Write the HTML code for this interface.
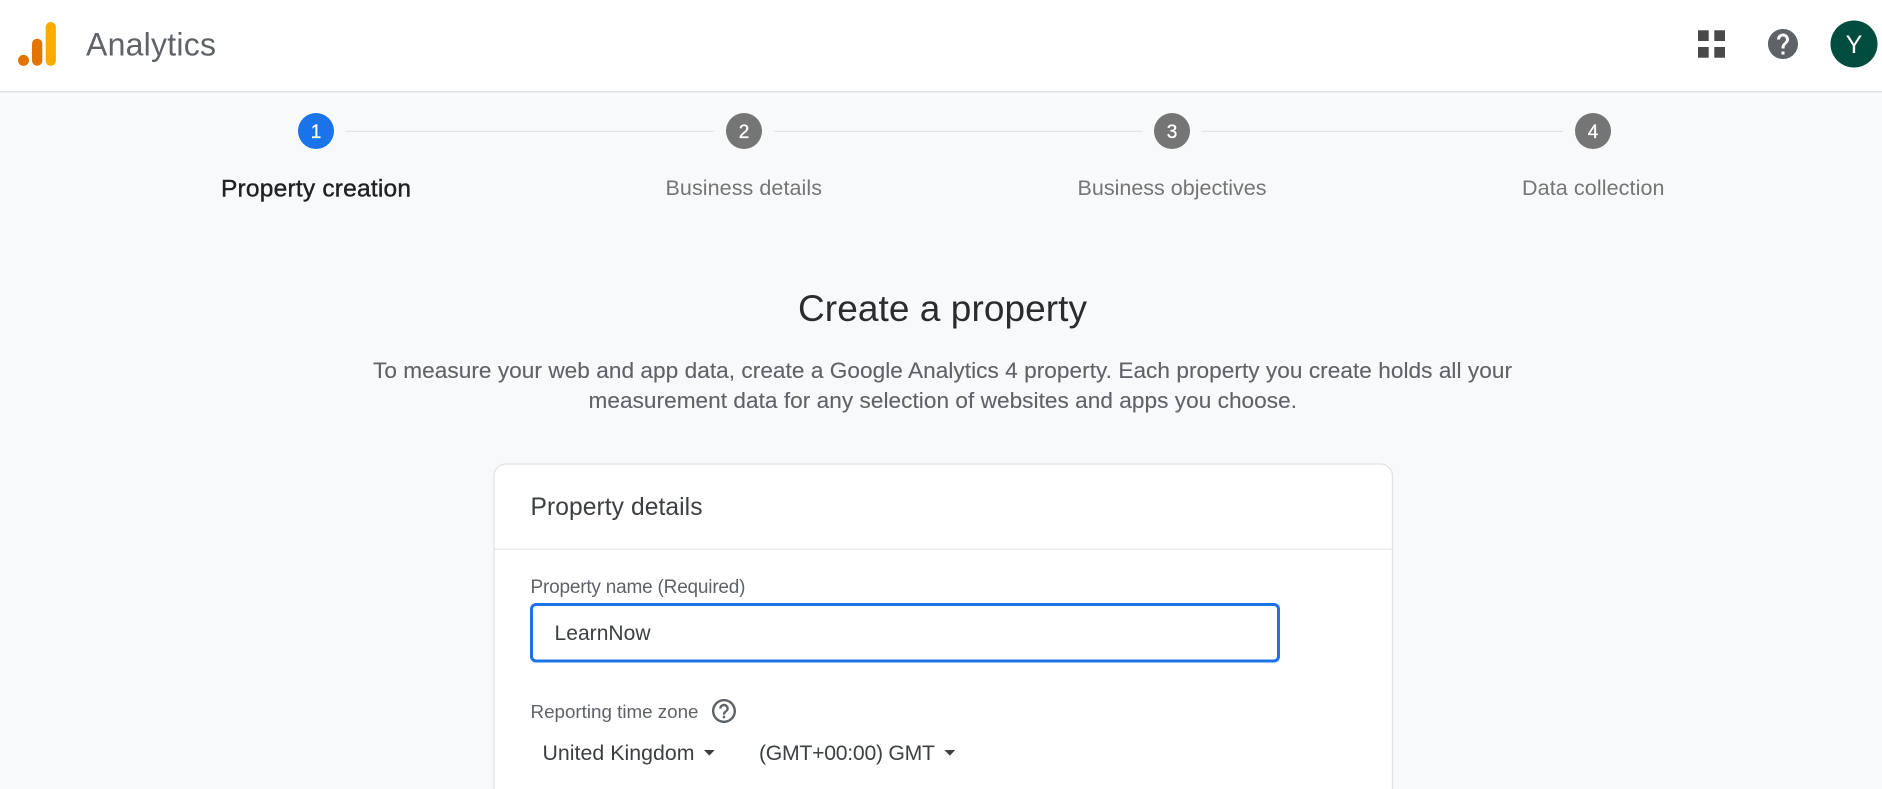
<!DOCTYPE html>
<html lang="en">
<head>
<meta charset="utf-8">
<title>Analytics</title>
<style>
html,body{margin:0;padding:0;width:1882px;height:789px;overflow:hidden;background:#f8f9fb}
svg{display:block;position:absolute;left:0;top:0}
text{font-family:"Liberation Sans",Arial,sans-serif}
</style>
</head>
<body>
<svg width="1882" height="789" viewBox="0 0 1882 789" xmlns="http://www.w3.org/2000/svg">
  <rect x="0" y="0" width="1882" height="789" fill="#f8f9fb"/>
  <!-- header -->
  <rect x="0" y="0" width="1882" height="91" fill="#fff"/>
  <rect x="0" y="91" width="1882" height="1.5" fill="#dfe1e5"/>
  <!-- logo -->
  <circle cx="23.5" cy="60.4" r="5.5" fill="#e37400"/>
  <rect x="32" y="38.7" width="10.3" height="27" rx="5" fill="#e37400"/>
  <rect x="45.7" y="22" width="10.2" height="43.8" rx="5" fill="#f9ab00"/>
  <text x="86" y="55.5" font-size="32" fill="#5f6368" textLength="130">Analytics</text>
  <!-- grid -->
  <g fill="#4a4a4a">
    <rect x="1698" y="30.3" width="10.7" height="10.7"/>
    <rect x="1714.3" y="30.3" width="10.7" height="10.7"/>
    <rect x="1698" y="47" width="10.7" height="10.7"/>
    <rect x="1714.3" y="47" width="10.7" height="10.7"/>
  </g>
  <!-- help -->
  <path transform="translate(1765 26) scale(1.5)" fill="#5f6368" d="M12 2C6.48 2 2 6.48 2 12s4.48 10 10 10 10-4.48 10-10S17.52 2 12 2zm1 17h-2v-2h2v2zm2.07-7.75l-.9.92C13.45 12.9 13 13.5 13 15h-2v-.5c0-1.1.45-2.1 1.17-2.83l1.24-1.26c.37-.36.59-.86.59-1.41 0-1.1-.9-2-2-2s-2 .9-2 2H8c0-2.21 1.79-4 4-4s4 1.79 4 4c0 .88-.36 1.68-.93 2.25z"/>
  <!-- avatar -->
  <circle cx="1854" cy="44" r="23.5" fill="#004d40"/>
  <text x="1854" y="53" font-size="25" fill="#fff" text-anchor="middle">Y</text>

  <!-- stepper -->
  <g stroke="#dfe1e5" stroke-width="1.2">
    <line x1="346" y1="131.3" x2="714" y2="131.3"/>
    <line x1="774" y1="131.3" x2="1142" y2="131.3"/>
    <line x1="1202" y1="131.3" x2="1563" y2="131.3"/>
  </g>
  <circle cx="316" cy="131" r="18" fill="#1a73e8"/>
  <circle cx="744" cy="131" r="18" fill="#757575"/>
  <circle cx="1172" cy="131" r="18" fill="#757575"/>
  <circle cx="1593" cy="131" r="18" fill="#757575"/>
  <g font-size="19" fill="#fff" text-anchor="middle" stroke="#fff" stroke-width=".3">
    <text x="316" y="138">1</text>
    <text x="744" y="138">2</text>
    <text x="1172" y="138">3</text>
    <text x="1593" y="138">4</text>
  </g>
  <text x="221" y="196.5" font-size="24.5" fill="#202124" stroke="#202124" stroke-width=".4" textLength="190">Property creation</text>
  <g font-size="21.5" fill="#757575">
    <text x="665.5" y="195" textLength="156.5">Business details</text>
    <text x="1077.5" y="195" textLength="189">Business objectives</text>
    <text x="1522" y="195" textLength="142.5">Data collection</text>
  </g>

  <!-- intro -->
  <text x="798" y="321" font-size="37" fill="#2b2c2f" textLength="289">Create a property</text>
  <g font-size="22.6" fill="#5f6368" stroke="#5f6368" stroke-width=".12">
    <text x="373" y="378" textLength="1139">To measure your web and app data, create a Google Analytics 4 property. Each property you create holds all your</text>
    <text x="588.5" y="408" textLength="708.5">measurement data for any selection of websites and apps you choose.</text>
  </g>

  <!-- card -->
  <path d="M494 800V476a12 12 0 0 1 12-12H1380.5a12 12 0 0 1 12 12V800Z" fill="#fff" stroke="#e1e3e6" stroke-width="1.3"/>
  <rect x="494.5" y="548.6" width="897.5" height="1.2" fill="#e1e3e6"/>
  <text x="530.5" y="515" font-size="24.6" fill="#3c4043" textLength="172">Property details</text>
  <text x="530.5" y="593" font-size="19" fill="#5f6368" textLength="215">Property name (Required)</text>
  <rect x="531.5" y="604.5" width="747" height="56.5" rx="4.5" fill="#fff" stroke="#1a73e8" stroke-width="3"/>
  <text x="554.5" y="640" font-size="21" fill="#3c4043" textLength="96">LearnNow</text>
  <text x="530.5" y="718" font-size="18.8" fill="#5f6368" textLength="168">Reporting time zone</text>
  <path transform="translate(709.6 696.6) scale(1.2)" fill="#5f6368" d="M11 18h2v-2h-2v2zm1-16C6.48 2 2 6.48 2 12s4.48 10 10 10 10-4.48 10-10S17.52 2 12 2zm0 18c-4.41 0-8-3.59-8-8s3.59-8 8-8 8 3.59 8 8-3.59 8-8 8zm0-14c-2.21 0-4 1.79-4 4h2c0-1.1.9-2 2-2s2 .9 2 2c0 2-3 1.75-3 5h2c0-2.25 3-2.5 3-5 0-2.21-1.79-4-4-4z"/>
  <text x="542.5" y="760" font-size="21.3" fill="#3c4043" textLength="152">United Kingdom</text>
  <path d="M704 750h10.7l-5.35 5.6z" fill="#3c4043"/>
  <text x="759" y="760" font-size="21.2" fill="#3c4043" textLength="176">(GMT+00:00) GMT</text>
  <path d="M944.5 750h10.7l-5.35 5.6z" fill="#3c4043"/>
</svg>
</body>
</html>
